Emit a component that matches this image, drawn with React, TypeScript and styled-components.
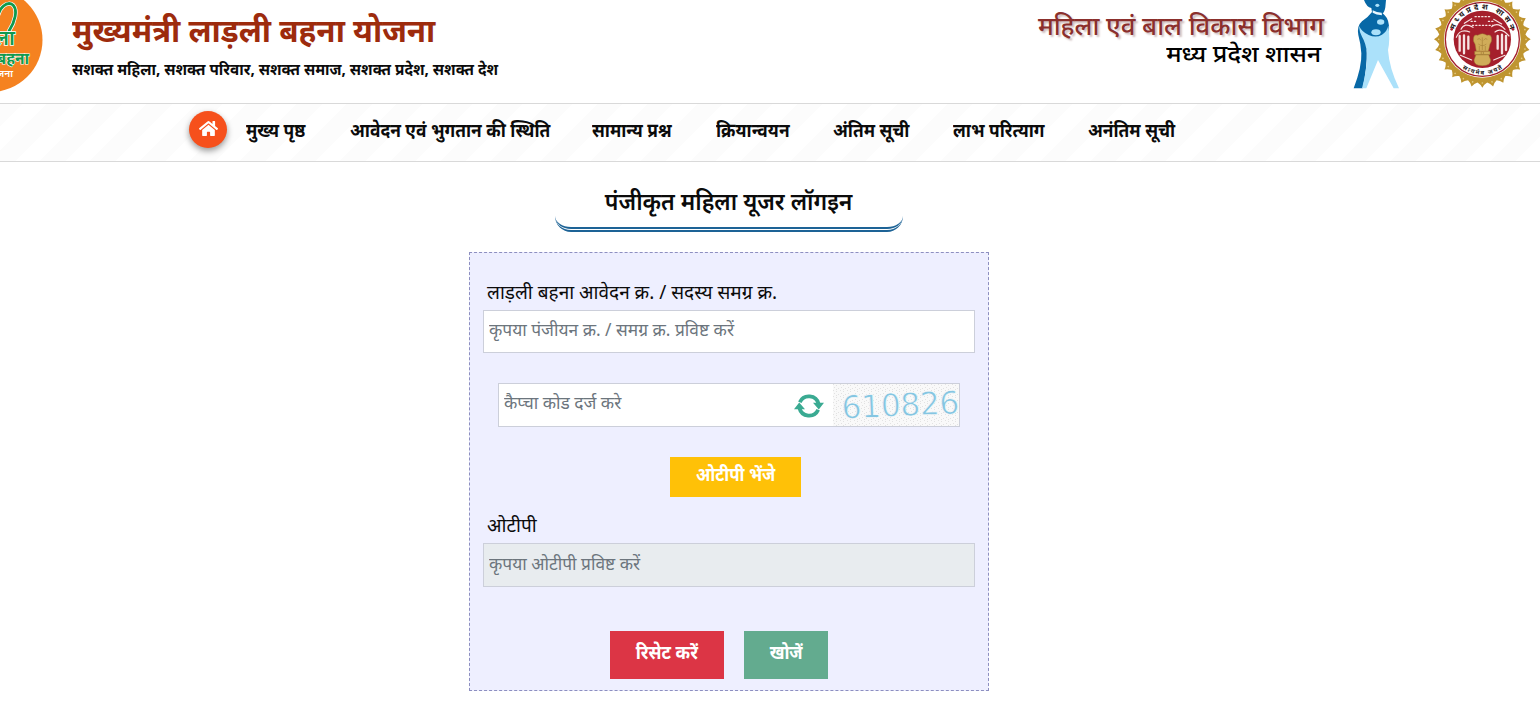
import React from "react";
import styled, { createGlobalStyle } from "styled-components";
import { FaHome } from "react-icons/fa";

const GlobalStyle = createGlobalStyle`
  * { box-sizing: border-box; }
  body { margin: 0; background: #fff; color: #0b0b0b; overflow: hidden; font-family: "Noto Sans", "Open Sans", sans-serif; }
  input, button { font-family: inherit; border-radius: 0; }
`;

const Page = styled.div`
  height: 721px;
  display: flex;
  flex-direction: column;
`;

const Header = styled.header`
  height: 103px;
  display: flex;
  flex: none;
`;

const Brand = styled.div`
  padding: 8px 0 0 29px;
  flex: 1;
`;

const SchemeTitle = styled.h1`
  margin: 0;
  font-size: 32px;
  line-height: 44px;
  font-weight: 700;
  color: #9d2b0d;
  white-space: nowrap;
`;

const Tagline = styled.p`
  margin: 0;
  padding-top: 5px;
  font-size: 16px;
  line-height: 24px;
  font-weight: 700;
  white-space: nowrap;
`;

const Narrow = styled.span<{ $x: number; $origin?: string }>`
  display: inline-block;
  transform: scaleX(${(p) => p.$x});
  transform-origin: ${(p) => p.$origin ?? "left"} center;
`;

const Department = styled.div`
  width: 290px;
  padding: 9px 0 0;
  margin-right: 16px;
  display: flex;
  flex-direction: column;
  align-items: flex-end;
`;

const DeptName = styled.div`
  font-size: 26px;
  line-height: 33px;
  font-weight: 500;
  color: #8b2f2c;
  text-shadow: 2px 2px 2px #cdbcbc;
  white-space: nowrap;
`;

const StateName = styled.div`
  padding-right: 3px;
  font-size: 23px;
  line-height: 22px;
  font-weight: 500;
  color: #000;
  white-space: nowrap;
`;

const Nav = styled.nav`
  height: 59px;
  flex: none;
  display: flex;
  padding: 7px 0 0 189px;
  border-top: 1px solid #d9d9d9;
  border-bottom: 1px solid #d9d9d9;
  background: repeating-linear-gradient(
    135deg,
    #fcfcfc 0 15.6px,
    #fff 15.6px 33.2px,
    #fcfcfc 33.2px 35.36px
  );
`;

const HomeBadge = styled.span`
  width: 38px;
  height: 37px;
  border-radius: 50%;
  color: #fff;
  background: #f6501c;
  display: grid;
  place-items: center;
  margin-right: 19px;
  padding-bottom: 2px;
  box-shadow: 0 3px 6px rgba(0, 0, 0, 0.4);
`;

const NavItem = styled.a<{ $w: number }>`
  width: ${(p) => p.$w}px;
  margin-right: 43px;
  font-size: 19px;
  line-height: 39px;
  font-weight: 700;
  white-space: nowrap;
`;

const Main = styled.main`
  width: 520px;
  margin-left: 469px;
  padding-top: 22px;
  display: flex;
  flex-direction: column;
  align-items: center;
`;

const Heading = styled.h2`
  margin: 0 0 20px;
  width: 348px;
  height: 48px;
  font-size: 24px;
  line-height: 34px;
  font-weight: 600;
  text-align: center;
  border-bottom: 5px double #1d6396;
  border-radius: 0 0 16px 16px;
  white-space: nowrap;
`;

const Form = styled.form`
  width: 520px;
  height: 439px;
  padding: 24px 13px 0;
  border: 1px dashed #8d8fc0;
  background: #eeefff;
`;

const Label = styled.label<{ $top?: number }>`
  display: block;
  margin-top: ${(p) => p.$top ?? 0}px;
  padding-left: 4px;
  height: 33px;
  line-height: 30px;
  font-size: 19px;
  white-space: nowrap;
`;

const Field = styled.input<{ $h: number }>`
  display: block;
  width: 100%;
  height: ${(p) => p.$h}px;
  padding: 0 5px 5px;
  border: 1px solid #cccfda;
  background: #fff;
  font-size: 17.35px;
  &::placeholder { color: #6c757d; opacity: 1; }
  &:disabled { background: #e8ecef; }
`;

const Captcha = styled.div`
  height: 44px;
  margin: 30px 15px;
  display: flex;
  align-items: center;
  border: 1px solid #cccfda;
  background: #fff;
`;

const CaptchaInput = styled.input`
  width: 295px;
  height: 42px;
  padding: 0 5px 6px;
  border: 0;
  font-size: 17.35px;
  background: transparent;
  &::placeholder { color: #6c757d; opacity: 1; }
`;

const CaptchaCode = styled.svg`
  margin-left: 9px;
  flex: none;
`;

const RefreshSlot = styled.span`
  display: flex;
  padding-top: 2px;
`;

const Actions = styled.div<{ $top?: number; $left: number }>`
  display: flex;
  gap: 20px;
  padding-top: ${(p) => p.$top ?? 0}px;
  padding-left: ${(p) => p.$left}px;
`;

const Button = styled.button<{ $bg: string; $w: number; $h: number }>`
  width: ${(p) => p.$w}px;
  height: ${(p) => p.$h}px;
  padding: 0 0 7px;
  border: 0;
  color: #fff;
  background: ${(p) => p.$bg};
  font-size: 18.5px;
  font-weight: 700;
  white-space: nowrap;
`;

const Emblems = styled.div`
  display: flex;
  gap: 5px;
`;

const items: [string, number][] = [
  ["मुख्य पृष्ठ", 61],
  ["आवेदन एवं भुगतान की स्थिति", 199],
  ["सामान्य प्रश्न", 81],
  ["क्रियान्वयन", 74],
  ["अंतिम सूची", 77],
  ["लाभ परित्याग", 92],
  ["अनंतिम सूची", 88],
];

const SchemeLogo = () => (
  <svg width="43" height="96" viewBox="0 0 43 96">
    <circle cx="-9.5" cy="40" r="52" fill="#f58220" />
    <g fill="none" strokeLinecap="round">
      <path d="M-3 22C-2 6 8 1 13 5C18 10 15 22 9 31" stroke="#fff" strokeWidth="4.2" />
      <path d="M-3 22C-2 6 8 1 13 5C18 10 15 22 9 31" stroke="#0f9a4f" strokeWidth="2.8" />
    </g>
    <g fontWeight="600" textAnchor="end" stroke="#fff" paintOrder="stroke" fill="#0f9a4f">
      <text x="15" y="45" fontSize="21" strokeWidth="1.6">ला</text>
      <text x="29" y="64" fontSize="15.5" fontStyle="italic" fontWeight="700" strokeWidth="1.2">बहना</text>
    </g>
    <text x="13" y="77" fontSize="10" fontWeight="600" fontStyle="italic" textAnchor="end" fill="#fff">योजना</text>
  </svg>
);

const FigureLogo = () => (
  <svg width="80" height="100" viewBox="0 0 240 300">
    <path
      fill="#0768a6"
      d="M72 0H138L136 22Q134 36 128 40L134 46Q149 60 147 92L122 112H92L80 150Q82 200 68 265H41Q66 200 64 160Q62 130 55 105Q50 78 66 64Q84 52 96 36L94 24Q80 22 72 0Z"
    />
    <path
      fill="#abe1fa"
      d="M57 78Q66 96 86 105Q108 115 126 104Q142 94 145 76Q151 120 144 150Q148 205 177 265H161L114 180L79 265H66Q82 205 81 160Q78 130 66 110Q58 96 57 78Z"
    />
    <g fill="#abe1fa">
      <ellipse cx="108" cy="97" rx="14" ry="9" />
      <ellipse cx="122" cy="66" rx="11" ry="8" />
      <ellipse cx="112" cy="16" rx="6" ry="5" />
      <path d="M98 31Q110 38 125 38L126 46Q108 45 98 38Z" fill="#e8f7ff" />
    </g>
  </svg>
);

const rays = Array.from({ length: 28 }, (_, i) => {
  const at = (r: number, k: number) => {
    const a = ((i + k) / 28) * Math.PI * 2 - Math.PI / 2;
    return `${(172 + r * Math.cos(a)).toFixed(1)} ${(118 + r * Math.sin(a)).toFixed(1)}`;
  };
  return `${i ? "L" : "M"}${at(130, -0.5)}Q${at(134, -0.2)} ${at(145, 0)}Q${at(134, 0.2)} ${at(130, 0.5)}`;
}).join("");

const StateEmblem = () => (
  <svg width="115" height="100" viewBox="0 0 345 300">
    <defs>
      <path id="arcTop" d="M86 128A87 87 0 1 1 258 128" />
      <path id="arcBottom" d="M66 118A106 106 0 0 0 278 118" />
    </defs>
    <path d={rays + "Z"} fill="#bf9530" />
    {Array.from({ length: 28 }, (_, i) => (
      <circle key={i} cx="172" cy="-13" r="2.5" fill="#e4cb80" transform={`rotate(${(i * 360) / 28} 172 118)`} />
    ))}
    <circle cx="172" cy="118" r="115" fill="#fff" />
    <circle cx="172" cy="118" r="111" fill="none" stroke="#a3202b" strokeWidth="4" />
    <circle cx="172" cy="118" r="86" fill="#a51f2c" />
    <g stroke="#f7e3e3" fill="none" strokeLinecap="round">
      <path strokeWidth="7" d="M104 108V152M117 106V160M130 110V146M218 108V146M231 104V160M243 108V150" />
      <g strokeWidth="3.5">
        <path d="M94 112Q106 84 134 96M108 88Q118 66 144 82M118 70L140 56M210 96Q228 80 252 108M200 80Q218 64 240 88M206 58L230 72" />
        <path d="M150 50H196M138 64H154M190 64H206M142 76H204" strokeDasharray="4 6" />
        <path d="M106 166L140 180M240 166L206 180" />
      </g>
    </g>
    <g fill="#d0ac59" stroke="#9b7530" strokeWidth="1.5">
      <path d="M146 112Q148 102 158 106Q172 96 186 106Q197 102 199 112Q202 124 195 132L190 154H154L150 132Q143 124 146 112Z" />
      <path d="M149 154H195V164H149ZM153 164H191L197 180Q198 197 172 197Q146 197 147 180Z" />
      <path d="M157 118Q164 112 168 121M176 121Q180 112 187 118M160 132Q172 142 184 132M172 112V150M163 138V152M181 138V152" fill="none" />
      <circle cx="172" cy="159" r="4" />
    </g>
    <g fill="#1d1718" fontWeight="700">
      <text fontSize="23">
        <textPath href="#arcTop" startOffset="50%" textAnchor="middle" textLength="222">मध्यप्रदेश शासन</textPath>
      </text>
      <text fontSize="18">
        <textPath href="#arcBottom" startOffset="50%" textAnchor="middle" textLength="128">सत्यमेव जयते</textPath>
      </text>
    </g>
    <circle cx="80" cy="88" r="4" fill="#a51f2c" />
    <circle cx="264" cy="88" r="4" fill="#a51f2c" />
  </svg>
);

const RefreshIcon = () => (
  <svg width="30" height="26" viewBox="0 0 30 26">
    <g fill="none" stroke="#3aaa92" strokeWidth="3.8">
      <path d="M5.8 9.2A10 10 0 0 1 24.6 11" />
      <path d="M24.2 16.8A10 10 0 0 1 5.4 15" />
    </g>
    <path d="M19 9.8H30L24.8 16.6Z M11 16.2H0L5.2 9.4Z" fill="#3aaa92" />
  </svg>
);

export default function App() {
  return (
    <Page>
      <GlobalStyle />
      <Header>
        <SchemeLogo />
        <Brand>
          <SchemeTitle><Narrow $x={0.98}>मुख्यमंत्री लाड़ली बहना योजना</Narrow></SchemeTitle>
          <Tagline><Narrow $x={0.953}>सशक्त महिला, सशक्त परिवार, सशक्त समाज, सशक्त प्रदेश, सशक्त देश</Narrow></Tagline>
        </Brand>
        <Department>
          <DeptName><Narrow $x={0.99} $origin="right">महिला एवं बाल विकास विभाग</Narrow></DeptName>
          <StateName><Narrow $x={1.09} $origin="right">मध्य प्रदेश शासन</Narrow></StateName>
        </Department>
        <Emblems>
          <FigureLogo />
          <StateEmblem />
        </Emblems>
      </Header>
      <Nav>
        <HomeBadge><FaHome size={19} /></HomeBadge>
        {items.map(([t, w]) => (
          <NavItem key={t} $w={w}><Narrow $x={0.914}>{t}</Narrow></NavItem>
        ))}
      </Nav>
      <Main>
        <Heading><Narrow $x={0.955} $origin="center">पंजीकृत महिला यूजर लॉगइन</Narrow></Heading>
        <Form>
          <Label>लाड़ली बहना आवेदन क्र. / सदस्य समग्र क्र.</Label>
          <Field $h={43} placeholder="कृपया पंजीयन क्र. / समग्र क्र. प्रविष्ट करें" />
          <Captcha>
            <CaptchaInput placeholder="कैप्चा कोड दर्ज करे" />
            <RefreshSlot><RefreshIcon /></RefreshSlot>
            <CaptchaCode width="126" height="42" viewBox="0 0 126 42">
              <defs>
                <pattern id="grain" width="7" height="6" patternUnits="userSpaceOnUse">
                  <rect width="7" height="6" fill="#f9f9f9" />
                  <path d="M0 0h1v1h-1zM3 1h1v1h-1zM1 3h1v1h-1zM5 4h1v1h-1zM3 5h1v1h-1z" fill="#e2e2e2" />
                </pattern>
              </defs>
              <rect width="126" height="42" fill="url(#grain)" />
              <text x="9" y="34.5" fontFamily="DejaVu Sans" fontSize="31.5" fill="#85c6e2" stroke="#f9f9f9" strokeWidth="0.7" textLength="118" transform="rotate(-2.5 9 34.5)">610826</text>
            </CaptchaCode>
          </Captcha>
          <Actions $left={187}>
            <Button type="button" $bg="#ffc107" $w={131} $h={40}><Narrow $x={0.91} $origin="center">ओटीपी भेंजे</Narrow></Button>
          </Actions>
          <Label $top={13}>ओटीपी</Label>
          <Field $h={44} disabled placeholder="कृपया ओटीपी प्रविष्ट करें" />
          <Actions $left={127} $top={44}>
            <Button type="button" $bg="#dc3545" $w={114} $h={48}><Narrow $x={0.95} $origin="center">रिसेट करें</Narrow></Button>
            <Button type="button" $bg="#63ab8f" $w={84} $h={48}><Narrow $x={0.91} $origin="center">खोजें</Narrow></Button>
          </Actions>
        </Form>
      </Main>
    </Page>
  );
}
